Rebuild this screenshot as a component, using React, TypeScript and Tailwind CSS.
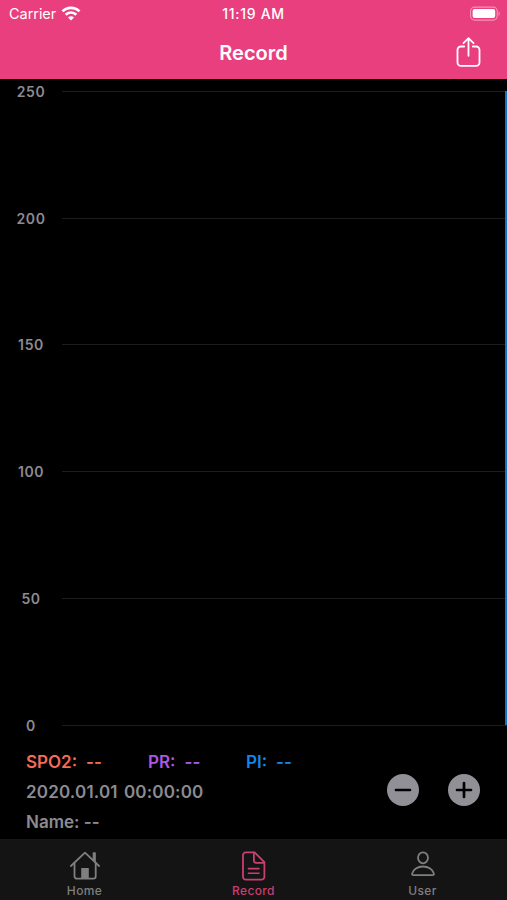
import { useState } from 'react';

const TICKS = [250, 200, 150, 100, 50, 0];

const READINGS = [
  { label: 'SPO2:', value: '--', className: 'w-[122px] text-[#f56b57]' },
  { label: 'PR:', value: '--', className: 'w-[98px] text-[#ac58e4]' },
  { label: 'PI:', value: '--', className: 'text-[#1783e8]' },
];

const WifiIcon = () => (
  <svg width="20" height="16" viewBox="0 0 20 16" fill="none" stroke="white" strokeWidth="2.7">
    <path d="M1.5 5.4a12 12 0 0 1 17 0" />
    <path d="M4.7 8.7a7.5 7.5 0 0 1 10.6 0" />
    <path d="M10 14.5l-3-3a4.1 4.1 0 0 1 6 0z" fill="white" stroke="none" />
  </svg>
);

const BatteryIcon = () => (
  <svg width="31" height="16" viewBox="0 0 31 16" fill="none">
    <rect x="0.6" y="1.1" width="26.6" height="13" rx="4" stroke="white" strokeOpacity="0.45" strokeWidth="1.1" />
    <rect x="2.6" y="3.1" width="22.6" height="9" rx="2" fill="white" />
    <path d="M28.6 5.5c1.4.5 1.4 3.7 0 4.2z" fill="white" fillOpacity="0.5" />
  </svg>
);

const ShareIcon = () => (
  <svg width="26" height="32" viewBox="0 0 26 32" fill="none" stroke="white" strokeWidth="1.8" strokeLinecap="round" strokeLinejoin="round">
    <path d="M9.2 9.5H5.9a3.4 3.4 0 0 0-3.4 3.4v12.6a3.4 3.4 0 0 0 3.4 3.4h15.2a3.4 3.4 0 0 0 3.4-3.4V12.9a3.4 3.4 0 0 0-3.4-3.4h-3.3" />
    <path d="M13.5 18.8V1.4M8.5 6.2l5-5 5 5" />
  </svg>
);

const HomeIcon = () => (
  <svg width="32" height="30" viewBox="0 0 32 30" fill="none" stroke="currentColor" strokeWidth="1.8" strokeLinecap="round" strokeLinejoin="round">
    <path d="M1.9 15L16 1.7 30.1 15" />
    <path d="M5.5 12v13.3a2.4 2.4 0 0 0 2.4 2.4h16.4a2.4 2.4 0 0 0 2.4-2.4V12" />
    <path d="M24.3 9V1.9h1.9v9z" fill="currentColor" strokeWidth="1.2" />
    <path d="M12.2 27.5V17h7.6v10.5z" fill="currentColor" stroke="none" />
  </svg>
);

const RecordIcon = () => (
  <svg width="24" height="30" viewBox="0 0 24 30" fill="none" stroke="currentColor" strokeWidth="1.8" strokeLinecap="round" strokeLinejoin="round">
    <path d="M12.6 1.3H4a3 3 0 0 0-3 3v21.4a3 3 0 0 0 3 3h15.4a3 3 0 0 0 3-3V11.2z" />
    <path d="M11.9 1.6v8a2.2 2.2 0 0 0 2.2 2.2h8.1" />
    <path d="M6.4 17.6h10.6M6.4 22.3h10.6" strokeWidth="1.6" />
  </svg>
);

const UserIcon = () => (
  <svg width="24" height="30" viewBox="0 0 24 30" fill="none" stroke="currentColor" strokeWidth="1.8" strokeLinejoin="round">
    <ellipse cx="12" cy="6.8" rx="5" ry="5.5" />
    <path d="M2.4 24.2h19.2a1.3 1.3 0 0 0 1.3-1.6C21.9 18.4 17.4 15.5 12 15.5S2.1 18.4 1.1 22.6a1.3 1.3 0 0 0 1.3 1.6z" />
  </svg>
);

const TABS = [
  { name: 'Home', Icon: HomeIcon },
  { name: 'Record', Icon: RecordIcon },
  { name: 'User', Icon: UserIcon },
];

const ZoomButton = ({ label, path }: { label: string; path: string }) => (
  <button aria-label={label} className="flex size-8 items-center justify-center rounded-full bg-[#919097]">
    <svg width="18" height="18" viewBox="0 0 18 18" stroke="black" strokeWidth="2.7" strokeLinecap="round">
      <path d={path} />
    </svg>
  </button>
);

export default function App() {
  const [activeTab, setActiveTab] = useState('Record');

  return (
    <div className="flex h-[900px] w-[507px] flex-col overflow-hidden bg-black font-['Inter',sans-serif]">
      <header className="h-[79px] shrink-0 bg-[#e93f7e] text-white">
        <div className="grid h-[27px] grid-cols-3 items-center pl-[9px] pr-1.5">
          <div className="flex items-center gap-[5px] text-[14.5px] leading-none tracking-[-0.05px]">
            <span className="pt-px">Carrier</span>
            <WifiIcon />
          </div>
          <span className="-ml-[3px] whitespace-nowrap text-center text-[14px] font-medium leading-none tracking-[0.7px]">11:19 AM</span>
          <div className="flex justify-end">
            <BatteryIcon />
          </div>
        </div>
        <div className="grid h-[52px] grid-cols-3 items-center pl-[26px] pr-[26px]">
          <span />
          <h1 className="text-center text-[20px] font-semibold leading-none">Record</h1>
          <button aria-label="Share" className="justify-self-end">
            <ShareIcon />
          </button>
        </div>
      </header>

      <main className="flex h-[661px] shrink-0 pt-[5.4px]">
        <div className="flex h-[648px] flex-1 flex-col justify-between">
          {TICKS.map((tick) => (
            <div key={tick} className="flex h-[14px] items-center">
              <span className="w-[62px] pt-px text-center text-[14px] font-semibold leading-none tracking-[0.6px] text-[#8c8b90]">
                {tick}
              </span>
              <div className="h-px flex-1 bg-[#1c1c1e]" />
            </div>
          ))}
        </div>
        {/* cursor line */}
        <div className="-ml-[2px] mt-[7px] h-[634px] w-[2px] bg-[#1072cc]" />
      </main>

      <section className="flex h-[99px] shrink-0 justify-between pl-[26px] pr-[27px] text-[17px] font-semibold text-[#8c8b90]">
        <div className="flex flex-col pt-[7px] leading-[30px]">
          <div className="flex">
            {READINGS.map(({ label, value, className }) => (
              <div key={label} className={`flex gap-[9px] ${className}`}>
                <span>{label}</span>
                <span>{value}</span>
              </div>
            ))}
          </div>
          <div className="tracking-[0.18px] [word-spacing:1.8px]">2020.01.01 00:00:00</div>
          <div>Name: --</div>
        </div>
        <div className="flex gap-[29px] pt-[34px]">
          <ZoomButton label="Zoom out" path="M2 9h14" />
          <ZoomButton label="Zoom in" path="M2 9h14M9 2v14" />
        </div>
      </section>

      <nav className="grid h-[61px] shrink-0 grid-cols-3 border-t border-[#171717] bg-[#141414]">
        {TABS.map(({ name, Icon }) => (
          <button
            key={name}
            onClick={() => setActiveTab(name)}
            className={`flex flex-col items-center pt-[11px] ${activeTab === name ? 'text-[#ca3e72]' : 'text-[#7f7f7f]'}`}
          >
            <Icon />
            <span className="mt-[3px] text-[12px] font-medium leading-[13px] tracking-[0.35px]">{name}</span>
          </button>
        ))}
      </nav>
    </div>
  );
}
